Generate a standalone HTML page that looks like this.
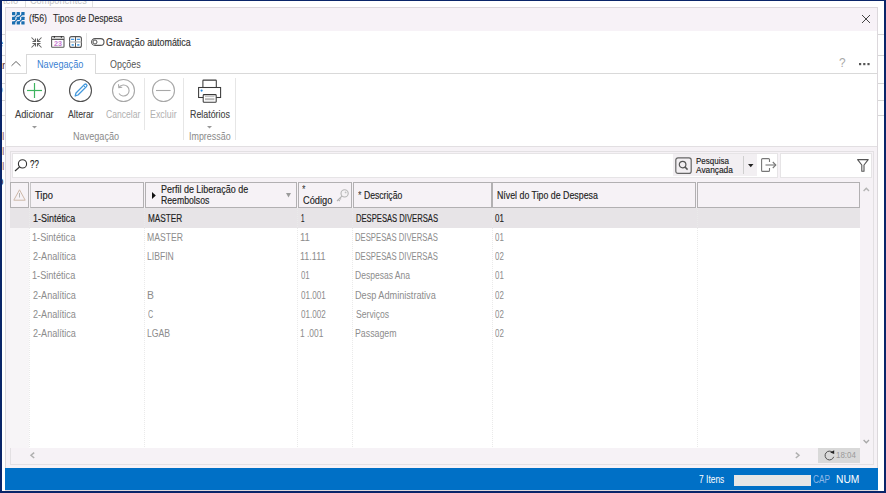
<!DOCTYPE html>
<html><head><meta charset="utf-8">
<style>
*{box-sizing:border-box;margin:0;padding:0}
html,body{width:886px;height:493px;overflow:hidden;background:#fff;font-family:"Liberation Sans",sans-serif;color:#333;position:relative}
.a{position:absolute}
.t{position:absolute;white-space:pre;line-height:1;transform-origin:0 0}
svg{position:absolute;overflow:visible}
</style></head><body>
<!-- background lines -->
<div class="a" style="left:0;top:34px;width:886px;height:1px;background:#d6d6d6"></div>
<div class="a" style="left:0;top:55px;width:886px;height:1px;background:#d6d6d6"></div>
<div class="a" style="left:0;top:83px;width:886px;height:1px;background:#d6d6d6"></div>
<div class="a" style="left:0;top:100px;width:886px;height:1px;background:#d6d6d6"></div>
<div class="a" style="left:0;top:115px;width:886px;height:1px;background:#d6d6d6"></div>
<div class="t" style="left:3px;top:-5px;font-size:11px;color:#c4c4c4;transform:scaleX(0.85)">telo</div>
<div class="a" style="left:25px;top:0;width:1px;height:7px;background:#e0e0e0"></div>
<div class="t" style="left:30px;top:-5px;font-size:11px;color:#c4c4c4;transform:scaleX(0.83)">Componentes</div>
<div class="a" style="left:92px;top:0;width:1px;height:7px;background:#e0e0e0"></div>

<div class="t" style="left:-3px;top:38px;font-size:11px;color:#2a3a6a">e</div>
<div class="t" style="left:-4px;top:60px;font-size:11px;color:#6a3a3a">ar</div>
<div class="t" style="left:-3px;top:84px;font-size:11px;color:#7aa0d0">o</div>
<div class="t" style="left:-4px;top:131px;font-size:11px;color:#9a6a6a">ol</div>
<div class="t" style="left:-4px;top:146px;font-size:11px;color:#9a6a6a">ol</div>
<div class="t" style="left:-4px;top:161px;font-size:11px;color:#9a6a6a">ol</div>
<div class="t" style="left:-5px;top:177px;font-size:11px;color:#333">O</div>
<!-- window -->
<div class="a" style="left:5px;top:7px;width:873px;height:484px;background:#fff;border:1px solid #dcd8dc"></div>
<!-- title bar -->
<div class="a" style="left:6px;top:8px;width:871px;height:22.7px;background:#f7f2f7"></div>
<!-- app icon -->
<svg style="left:11.7px;top:11.9px" width="13" height="13" viewBox="0 0 13 13">
 <g fill="#1a6eb0">
  <rect x="0" y="0" width="3.3" height="3.3" rx="0.5"/><rect x="4.65" y="0" width="3.3" height="3.3" rx="0.5"/><rect x="9.3" y="0" width="3.3" height="3.3" rx="0.5"/>
  <rect x="0" y="4.65" width="3.3" height="3.3" rx="0.5"/><rect x="4.65" y="4.65" width="3.3" height="3.3" rx="0.5"/><rect x="9.3" y="4.65" width="3.3" height="3.3" rx="0.5"/>
  <rect x="0" y="9.3" width="3.3" height="3.3" rx="0.5"/><rect x="4.65" y="9.3" width="3.3" height="3.3" rx="0.5"/><rect x="9.3" y="9.3" width="3.3" height="3.3" rx="0.5"/>
 </g>
 <g stroke="#1a6eb0" stroke-width="1.1"><line x1="1.6" y1="6.3" x2="6.3" y2="1.6"/><line x1="1.6" y1="11" x2="11" y2="1.6"/><line x1="6.3" y1="11" x2="11" y2="6.3"/></g>
</svg>
<!-- close X -->
<svg style="left:862px;top:14.5px" width="8" height="8" viewBox="0 0 8 8"><g stroke="#3a3a3a" stroke-width="0.95"><line x1="0" y1="0" x2="8" y2="8"/><line x1="8" y1="0" x2="0" y2="8"/></g></svg>

<!-- toolbar icons -->
<svg style="left:31px;top:36.5px" width="11" height="11" viewBox="0 0 11 11"><g stroke="#606060" stroke-width="1.05" fill="none">
 <line x1="0.5" y1="0.5" x2="4.5" y2="4.5"/><polyline points="1.5,4.5 4.5,4.5 4.5,1.5"/>
 <line x1="10.5" y1="0.5" x2="6.5" y2="4.5"/><polyline points="9.5,4.5 6.5,4.5 6.5,1.5"/>
 <line x1="0.5" y1="10.5" x2="4.5" y2="6.5"/><polyline points="1.5,6.5 4.5,6.5 4.5,9.5"/>
 <line x1="10.5" y1="10.5" x2="6.5" y2="6.5"/><polyline points="9.5,6.5 6.5,6.5 6.5,9.5"/>
</g></svg>
<svg style="left:51px;top:36px" width="14" height="12" viewBox="0 0 14 12">
 <rect x="0.6" y="0.6" width="12.4" height="10.6" rx="0.8" fill="#fff" stroke="#5a5a5a" stroke-width="1.1"/>
 <rect x="1.1" y="1.1" width="11.4" height="2.3" fill="#d8d8d8"/>
 <line x1="0.6" y1="3.4" x2="13" y2="3.4" stroke="#444" stroke-width="1"/>
 <line x1="3.4" y1="0" x2="3.4" y2="1.8" stroke="#333" stroke-width="1.2"/><line x1="10.4" y1="0" x2="10.4" y2="1.8" stroke="#333" stroke-width="1.2"/>
 <text x="6.9" y="10.1" font-size="7.2" font-family="Liberation Sans" fill="#c77ad0" text-anchor="middle" font-weight="700">23</text>
</svg>
<svg style="left:69px;top:36px" width="13" height="12" viewBox="0 0 13 12">
 <rect x="0.6" y="0.6" width="11.8" height="10.8" rx="2" fill="#fff" stroke="#555" stroke-width="1.1"/>
 <line x1="6.5" y1="0.6" x2="6.5" y2="11.4" stroke="#555" stroke-width="1"/><rect x="0.6" y="5.3" width="11.8" height="1.4" fill="#bbb"/>
 <g stroke="#2a8ae0" stroke-width="1.1"><line x1="2" y1="3.3" x2="5.2" y2="3.3"/><line x1="7.8" y1="3.3" x2="11" y2="3.3"/></g>
 <g fill="#5aa8e8"><rect x="2.6" y="8" width="2.2" height="1.8"/><rect x="8.2" y="8" width="2.2" height="1.8"/></g>
</svg>
<div class="a" style="left:86px;top:33px;width:1px;height:17px;background:#e4e4e4"></div>
<svg style="left:91px;top:38px" width="14" height="8" viewBox="0 0 14 8">
 <rect x="0.6" y="0.6" width="12.4" height="6.8" rx="3.4" fill="none" stroke="#555" stroke-width="1.1"/>
 <circle cx="4" cy="4" r="2" fill="none" stroke="#555" stroke-width="1"/>
</svg>

<!-- tabs row -->
<div class="a" style="left:6px;top:73px;width:871px;height:1px;background:#d9d9d9"></div>
<div class="a" style="left:26px;top:54px;width:70px;height:20px;background:#fff;border:1px solid #d9d9d9;border-bottom:none"></div>
<svg style="left:11px;top:61px" width="10" height="5" viewBox="0 0 10 5"><polyline points="0.5,4.8 5,0.5 9.5,4.8" fill="none" stroke="#666" stroke-width="1"/></svg>
<!-- ? and ... -->
<div class="t" style="left:839.3px;top:57.2px;font-size:12.5px;color:#a8a8a8;transform:scaleX(0.95)">?</div>
<svg style="left:859px;top:62.6px" width="11" height="3" viewBox="0 0 11 3"><g fill="#555"><rect x="0" y="0" width="2.2" height="2.2"/><rect x="4.2" y="0" width="2.2" height="2.2"/><rect x="8.4" y="0" width="2.2" height="2.2"/></g></svg>

<!-- ribbon icons -->
<svg style="left:22px;top:78px" width="25" height="25" viewBox="0 0 25 25">
 <circle cx="12.5" cy="12.5" r="11" fill="none" stroke="#505050" stroke-width="1.1"/>
 <g stroke="#3db45f" stroke-width="1.2"><line x1="5" y1="12.5" x2="20" y2="12.5"/><line x1="12.5" y1="5" x2="12.5" y2="20"/></g>
</svg>
<svg style="left:68px;top:78px" width="25" height="25" viewBox="0 0 25 25">
 <circle cx="12.5" cy="12.5" r="11" fill="none" stroke="#505050" stroke-width="1.1"/>
 <path d="M7.2,18 L8,15 L16.5,6.5 Q17.5,5.5 18.5,6.5 Q19.5,7.5 18.5,8.5 L10,17 Z" fill="none" stroke="#4499dd" stroke-width="1.3" stroke-linejoin="round"/>
 <line x1="15.5" y1="7.5" x2="17.5" y2="9.5" stroke="#4499dd" stroke-width="1"/>
</svg>
<svg style="left:111px;top:78px" width="25" height="25" viewBox="0 0 25 25">
 <circle cx="12.5" cy="12.5" r="11" fill="none" stroke="#a8a8a8" stroke-width="1.1"/>
 <path d="M8.2,9.2 A5.5,5.5 0 1 1 8,15.5" fill="none" stroke="#a8a8a8" stroke-width="1.1"/>
 <polyline points="7.5,6.2 7.8,9.6 11.2,9.2" fill="none" stroke="#a8a8a8" stroke-width="1.1"/>
</svg>
<div class="a" style="left:144px;top:78px;width:1px;height:52px;background:#e6e6e6"></div>
<svg style="left:151px;top:78px" width="25" height="25" viewBox="0 0 25 25">
 <circle cx="12.5" cy="12.5" r="11" fill="none" stroke="#a8a8a8" stroke-width="1.1"/>
 <line x1="5" y1="12.5" x2="19.6" y2="12.5" stroke="#a8a8a8" stroke-width="1.1"/>
</svg>
<div class="a" style="left:183px;top:78px;width:1px;height:62px;background:#e6e6e6"></div>
<svg style="left:197px;top:79px" width="25" height="25" viewBox="0 0 25 25">
 <rect x="5.9" y="1.1" width="13.4" height="7.4" rx="0.6" fill="#fff" stroke="#3a3a3a" stroke-width="1.05"/>
 <rect x="1.6" y="8.5" width="22" height="10" fill="#fff" stroke="#3a3a3a" stroke-width="1.05"/>
 <rect x="6.2" y="15.6" width="13" height="7.6" rx="0.8" fill="#fff" stroke="#3a3a3a" stroke-width="1.05"/>
 <line x1="8" y1="17.6" x2="17.4" y2="17.6" stroke="#aaa" stroke-width="0.8"/>
 <rect x="8" y="19.2" width="9.4" height="2" fill="#b8b8b8"/>
 <circle cx="4.6" cy="11.6" r="1.1" fill="#2a8ae0"/>
</svg>
<div class="a" style="left:235px;top:78px;width:1px;height:62px;background:#e6e6e6"></div>
<!-- dropdown carets -->
<svg style="left:32px;top:125.5px" width="5" height="3" viewBox="0 0 5 3"><polygon points="0,0 5,0 2.5,2.5" fill="#999"/></svg>
<svg style="left:206.5px;top:125.5px" width="5" height="3" viewBox="0 0 5 3"><polygon points="0,0 5,0 2.5,2.5" fill="#999"/></svg>

<!-- ribbon bottom line -->
<div class="a" style="left:6px;top:146px;width:871px;height:1px;background:#e2dfe2"></div>
<!-- content bg -->
<div class="a" style="left:6px;top:147px;width:871px;height:321px;background:#f6f2f6"></div>
<!-- panel border -->
<div class="a" style="left:10px;top:151px;width:864px;height:314px;border:1px solid #e3e0e3"></div>
<!-- search box -->
<div class="a" style="left:12px;top:152.8px;width:766px;height:25px;background:#fff;border:1px solid #e6e4e6"></div>
<div class="a" style="left:673px;top:154px;width:84px;height:22px;background:#f2eff2"></div>
<svg style="left:14px;top:159px" width="14" height="13" viewBox="0 0 14 13">
 <circle cx="8.5" cy="4.9" r="4.1" fill="none" stroke="#333" stroke-width="1.1"/>
 <line x1="5.5" y1="8" x2="1" y2="12" stroke="#333" stroke-width="1.2"/>
</svg>
<svg style="left:675px;top:156.5px" width="17" height="17" viewBox="0 0 17 17">
 <rect x="0.8" y="0.8" width="15.4" height="15.6" rx="2.2" fill="none" stroke="#666" stroke-width="1.2"/>
 <circle cx="7.6" cy="7.6" r="3.3" fill="none" stroke="#555" stroke-width="1.2"/>
 <line x1="10" y1="10" x2="12.6" y2="12.6" stroke="#555" stroke-width="1.5"/>
</svg>
<div class="a" style="left:743px;top:156px;width:1px;height:18px;background:#cfcfcf"></div>
<svg style="left:747.5px;top:164px" width="6" height="4" viewBox="0 0 6 4"><polygon points="0,0 5.5,0 2.75,3.2" fill="#222"/></svg>
<svg style="left:760.5px;top:158px" width="16" height="14" viewBox="0 0 16 14">
 <path d="M8.5,4 V1.6 Q8.5,0.6 7.5,0.6 H1.6 Q0.6,0.6 0.6,1.6 V12.4 Q0.6,13.4 1.6,13.4 H7.5 Q8.5,13.4 8.5,12.4 V10" fill="none" stroke="#777" stroke-width="1.1"/>
 <line x1="4.5" y1="7" x2="14.8" y2="7" stroke="#777" stroke-width="1.1"/>
 <polyline points="11.8,4 14.8,7 11.8,10" fill="none" stroke="#777" stroke-width="1.1"/>
</svg>
<div class="a" style="left:779.5px;top:152.8px;width:92px;height:25px;background:#fff;border:1px solid #e6e4e6"></div>
<svg style="left:857px;top:158.5px" width="12" height="13" viewBox="0 0 12 13">
 <path d="M0.6,0.6 H11.2 L7,6 V12.2 H4.8 V6 Z" fill="none" stroke="#555" stroke-width="1.1" stroke-linejoin="round"/>
</svg>

<!-- grid -->
<div class="a" style="left:10px;top:207.5px;width:850px;height:240px;background:#fff"></div>
<div class="a" style="left:10px;top:207.5px;width:19px;height:240px;background:#f7f5f7"></div>
<div class="a" style="left:10px;top:208px;width:850px;height:19.5px;background:#e7e4e7"></div>
<!-- header cells -->
<div class="a" style="left:10px;top:182px;width:19px;height:25.5px;border:1px solid #b2b0b2;background:#f6f2f6"></div>
<div class="a" style="left:29.5px;top:182px;width:114px;height:25.5px;border:1px solid #b2b0b2;border-left-color:#c8c6c8;background:#f6f2f6"></div>
<div class="a" style="left:144.5px;top:182px;width:152px;height:25.5px;border:1px solid #b2b0b2;background:#f6f2f6"></div>
<div class="a" style="left:297.5px;top:182px;width:54px;height:25.5px;border:1px solid #b2b0b2;background:#f6f2f6"></div>
<div class="a" style="left:352.5px;top:182px;width:139px;height:25.5px;border:1px solid #b2b0b2;background:#f6f2f6"></div>
<div class="a" style="left:492px;top:182px;width:204px;height:25.5px;border:1px solid #b2b0b2;background:#f6f2f6"></div>
<div class="a" style="left:697px;top:182px;width:162.5px;height:25.5px;border:1px solid #b2b0b2;background:#f6f2f6"></div>
<!-- warning triangle -->
<svg style="left:13px;top:189px" width="13" height="12" viewBox="0 0 13 12">
 <path d="M6.5,0.8 L12.2,11.2 H0.8 Z" fill="none" stroke="#cdb8a8" stroke-width="1" stroke-linejoin="round"/>
 <line x1="6.5" y1="4" x2="6.5" y2="8.5" stroke="#aaa" stroke-width="0.9"/>
</svg>
<!-- perfil triangle & filter -->
<svg style="left:152px;top:191.5px" width="4" height="7" viewBox="0 0 4 7"><polygon points="0,0 3.8,3.5 0,7" fill="#111"/></svg>
<svg style="left:286px;top:192.5px" width="5" height="5" viewBox="0 0 5 5"><polygon points="0,0 5,0 2.5,4.5" fill="#9a9a9a"/></svg>
<!-- key -->
<svg style="left:336px;top:189px" width="13" height="13" viewBox="0 0 13 13">
 <circle cx="8.6" cy="4.4" r="3.6" fill="#f5f2f5" stroke="#b5b5b5" stroke-width="1.1"/>
 <circle cx="9.6" cy="3.4" r="0.9" fill="#c0c0c0"/>
 <path d="M6.2,6.8 L1,12 M2.4,10.6 L3.8,12 M3.8,9.2 L5,10.4" fill="none" stroke="#b5b5b5" stroke-width="1.1"/>
</svg>
<!-- dotted column separators -->
<div class="a" style="left:29px;top:208px;width:0;height:239px;border-left:1px dotted #eaeaea"></div>
<div class="a" style="left:144px;top:208px;width:0;height:239px;border-left:1px dotted #eaeaea"></div>
<div class="a" style="left:297px;top:208px;width:0;height:239px;border-left:1px dotted #eaeaea"></div>
<div class="a" style="left:352px;top:208px;width:0;height:239px;border-left:1px dotted #eaeaea"></div>
<div class="a" style="left:491.5px;top:208px;width:0;height:239px;border-left:1px dotted #eaeaea"></div>
<div class="a" style="left:696.5px;top:208px;width:0;height:239px;border-left:1px dotted #eaeaea"></div>
<!-- scroll arrows -->
<svg style="left:863.3px;top:187px" width="7" height="5" viewBox="0 0 7 5"><polyline points="0.6,4 3.3,1.2 6,4" fill="none" stroke="#b4b4b4" stroke-width="1.4"/></svg>
<svg style="left:863.3px;top:439px" width="7" height="5" viewBox="0 0 7 5"><polyline points="0.6,1 3.3,3.8 6,1" fill="none" stroke="#a8a8a8" stroke-width="1.3"/></svg>
<svg style="left:29.5px;top:451.8px" width="5" height="7" viewBox="0 0 5 7"><polyline points="4.2,0.6 1,3.3 4.2,6" fill="none" stroke="#b0b0b0" stroke-width="1.5"/></svg>
<svg style="left:795px;top:451.8px" width="5" height="7" viewBox="0 0 5 7"><polyline points="0.8,0.6 4,3.3 0.8,6" fill="none" stroke="#b0b0b0" stroke-width="1.5"/></svg>
<!-- refresh box -->
<div class="a" style="left:818px;top:448px;width:42px;height:15px;background:#d9d9d9"></div>
<svg style="left:823.8px;top:450px" width="11" height="11" viewBox="0 0 11 11">
 <path d="M8.6,2.4 A4.4,4.4 0 1 0 9.7,6.8" fill="none" stroke="#505050" stroke-width="1"/>
 <polygon points="6.2,2.6 10.2,0.2 10.2,4" fill="#222"/>
</svg>

<!-- status bar -->
<div class="a" style="left:5px;top:468px;width:873px;height:22px;background:#0070c6"></div>
<div class="a" style="left:733.5px;top:474.5px;width:77px;height:11px;background:#e6e6e6"></div>

<!-- navy frame -->
<div class="a" style="left:0;top:0;width:886px;height:493px;border:2px solid #0a2569;border-top-width:1.5px;border-right-width:2.2px;border-bottom-width:2.2px"></div>

<div class="t" style="left:29.00px;top:13.00px;font-size:10.5px;font-weight:400;color:#2a2a2a;transform:scaleX(0.8286);-webkit-text-stroke:0.1px #2a2a2a;">(f56)</div>
<div class="t" style="left:52.70px;top:13.00px;font-size:10.5px;font-weight:400;color:#2a2a2a;transform:scaleX(0.8224);-webkit-text-stroke:0.1px #2a2a2a;">Tipos de Despesa</div>
<div class="t" style="left:106.20px;top:37.75px;font-size:10px;font-weight:400;color:#333;transform:scaleX(0.8916);-webkit-text-stroke:0.15px #333;">Gravação automática</div>
<div class="t" style="left:37.28px;top:59.75px;font-size:10px;font-weight:400;color:#3b7fd2;transform:scaleX(0.9163);">Navegação</div>
<div class="t" style="left:110.20px;top:59.75px;font-size:10px;font-weight:400;color:#555;transform:scaleX(0.8912);">Opções</div>
<div class="t" style="left:15.10px;top:109.75px;font-size:10px;font-weight:400;color:#404040;transform:scaleX(0.9262);-webkit-text-stroke:0.1px #404040;">Adicionar</div>
<div class="t" style="left:67.60px;top:109.75px;font-size:10px;font-weight:400;color:#404040;transform:scaleX(0.8700);-webkit-text-stroke:0.1px #404040;">Alterar</div>
<div class="t" style="left:106.00px;top:109.75px;font-size:10px;font-weight:400;color:#b0b0b0;transform:scaleX(0.8575);">Cancelar</div>
<div class="t" style="left:150.01px;top:109.75px;font-size:10px;font-weight:400;color:#b0b0b0;transform:scaleX(0.8862);">Excluir</div>
<div class="t" style="left:189.70px;top:109.75px;font-size:10px;font-weight:400;color:#404040;transform:scaleX(0.8844);-webkit-text-stroke:0.1px #404040;">Relatórios</div>
<div class="t" style="left:73.39px;top:131.75px;font-size:10px;font-weight:400;color:#8a8a8a;transform:scaleX(0.9122);">Navegação</div>
<div class="t" style="left:188.81px;top:131.75px;font-size:10px;font-weight:400;color:#8a8a8a;transform:scaleX(0.8911);">Impressão</div>
<div class="t" style="left:30.40px;top:159.75px;font-size:10px;font-weight:400;color:#222;transform:scaleX(0.7909);-webkit-text-stroke:0.15px #222;">??</div>
<div class="t" style="left:696.40px;top:156.85px;font-size:8.8px;font-weight:400;color:#222;transform:scaleX(0.9081);-webkit-text-stroke:0.15px #222;">Pesquisa</div>
<div class="t" style="left:696.40px;top:165.85px;font-size:8.8px;font-weight:400;color:#222;transform:scaleX(0.9462);-webkit-text-stroke:0.15px #222;">Avançada</div>
<div class="t" style="left:34.70px;top:190.75px;font-size:10px;font-weight:400;color:#222;transform:scaleX(0.9368);-webkit-text-stroke:0.15px #222;">Tipo</div>
<div class="t" style="left:160.60px;top:184.75px;font-size:10px;font-weight:400;color:#222;transform:scaleX(0.8959);-webkit-text-stroke:0.15px #222;">Perfil de Liberação de</div>
<div class="t" style="left:160.80px;top:195.75px;font-size:10px;font-weight:400;color:#222;transform:scaleX(0.8696);-webkit-text-stroke:0.15px #222;">Reembolsos</div>
<div class="t" style="left:301.80px;top:184.75px;font-size:10px;font-weight:400;color:#333;transform:scaleX(0.9000);">*</div>
<div class="t" style="left:302.60px;top:195.75px;font-size:10px;font-weight:400;color:#222;transform:scaleX(0.9250);-webkit-text-stroke:0.15px #222;">Código</div>
<div class="t" style="left:357.50px;top:190.75px;font-size:10px;font-weight:400;color:#333;transform:scaleX(0.9000);">*</div>
<div class="t" style="left:363.80px;top:190.75px;font-size:10px;font-weight:400;color:#222;transform:scaleX(0.8600);-webkit-text-stroke:0.15px #222;">Descrição</div>
<div class="t" style="left:497.00px;top:190.75px;font-size:10px;font-weight:400;color:#222;transform:scaleX(0.8809);-webkit-text-stroke:0.15px #222;">Nível do Tipo de Despesa</div>
<div class="t" style="left:32.60px;top:213.75px;font-size:10px;font-weight:400;color:#1e1e1e;transform:scaleX(0.8958);-webkit-text-stroke:0.15px #1e1e1e;">1-Sintética</div>
<div class="t" style="left:147.60px;top:213.75px;font-size:10px;font-weight:400;color:#1e1e1e;transform:scaleX(0.8214);-webkit-text-stroke:0.15px #1e1e1e;">MASTER</div>
<div class="t" style="left:301.00px;top:213.75px;font-size:10px;font-weight:400;color:#1e1e1e;transform:scaleX(0.6167);-webkit-text-stroke:0.15px #1e1e1e;">1</div>
<div class="t" style="left:356.00px;top:213.75px;font-size:10px;font-weight:400;color:#1e1e1e;transform:scaleX(0.7645);-webkit-text-stroke:0.15px #1e1e1e;">DESPESAS DIVERSAS</div>
<div class="t" style="left:495.30px;top:213.75px;font-size:10px;font-weight:400;color:#1e1e1e;transform:scaleX(0.7909);-webkit-text-stroke:0.15px #1e1e1e;">01</div>
<div class="t" style="left:31.69px;top:232.75px;font-size:10px;font-weight:400;color:#8c8c8c;transform:scaleX(0.9149);">1-Sintética</div>
<div class="t" style="left:146.74px;top:232.75px;font-size:10px;font-weight:400;color:#8c8c8c;transform:scaleX(0.8625);">MASTER</div>
<div class="t" style="left:300.04px;top:232.75px;font-size:10px;font-weight:400;color:#8c8c8c;transform:scaleX(0.9556);">11</div>
<div class="t" style="left:355.23px;top:232.75px;font-size:10px;font-weight:400;color:#8c8c8c;transform:scaleX(0.7717);">DESPESAS DIVERSAS</div>
<div class="t" style="left:495.30px;top:232.75px;font-size:10px;font-weight:400;color:#8c8c8c;transform:scaleX(0.7909);">01</div>
<div class="t" style="left:32.60px;top:251.75px;font-size:10px;font-weight:400;color:#8c8c8c;transform:scaleX(0.9083);">2-Analítica</div>
<div class="t" style="left:146.74px;top:251.75px;font-size:10px;font-weight:400;color:#8c8c8c;transform:scaleX(0.8600);">LIBFIN</div>
<div class="t" style="left:300.10px;top:251.75px;font-size:10px;font-weight:400;color:#8c8c8c;transform:scaleX(0.9000);">11.111</div>
<div class="t" style="left:355.23px;top:251.75px;font-size:10px;font-weight:400;color:#8c8c8c;transform:scaleX(0.7717);">DESPESAS DIVERSAS</div>
<div class="t" style="left:495.30px;top:251.75px;font-size:10px;font-weight:400;color:#8c8c8c;transform:scaleX(0.7909);">02</div>
<div class="t" style="left:31.69px;top:270.75px;font-size:10px;font-weight:400;color:#8c8c8c;transform:scaleX(0.9149);">1-Sintética</div>
<div class="t" style="left:301.00px;top:270.75px;font-size:10px;font-weight:400;color:#8c8c8c;transform:scaleX(0.7818);">01</div>
<div class="t" style="left:355.15px;top:270.75px;font-size:10px;font-weight:400;color:#8c8c8c;transform:scaleX(0.8531);">Despesas Ana</div>
<div class="t" style="left:495.30px;top:270.75px;font-size:10px;font-weight:400;color:#8c8c8c;transform:scaleX(0.7909);">01</div>
<div class="t" style="left:32.60px;top:290.75px;font-size:10px;font-weight:400;color:#8c8c8c;transform:scaleX(0.9083);">2-Analítica</div>
<div class="t" style="left:146.56px;top:290.75px;font-size:10px;font-weight:400;color:#8c8c8c;transform:scaleX(1.0400);">B</div>
<div class="t" style="left:301.00px;top:290.75px;font-size:10px;font-weight:400;color:#8c8c8c;transform:scaleX(0.8100);">01.001</div>
<div class="t" style="left:355.09px;top:290.75px;font-size:10px;font-weight:400;color:#8c8c8c;transform:scaleX(0.9136);">Desp Administrativa</div>
<div class="t" style="left:495.30px;top:290.75px;font-size:10px;font-weight:400;color:#8c8c8c;transform:scaleX(0.7909);">02</div>
<div class="t" style="left:32.60px;top:309.75px;font-size:10px;font-weight:400;color:#8c8c8c;transform:scaleX(0.9083);">2-Analítica</div>
<div class="t" style="left:147.60px;top:309.75px;font-size:10px;font-weight:400;color:#8c8c8c;transform:scaleX(0.7143);">C</div>
<div class="t" style="left:301.00px;top:309.75px;font-size:10px;font-weight:400;color:#8c8c8c;transform:scaleX(0.8100);">01.002</div>
<div class="t" style="left:356.00px;top:309.75px;font-size:10px;font-weight:400;color:#8c8c8c;transform:scaleX(0.8618);">Serviços</div>
<div class="t" style="left:495.30px;top:309.75px;font-size:10px;font-weight:400;color:#8c8c8c;transform:scaleX(0.7909);">02</div>
<div class="t" style="left:32.60px;top:328.75px;font-size:10px;font-weight:400;color:#8c8c8c;transform:scaleX(0.9083);">2-Analítica</div>
<div class="t" style="left:146.73px;top:328.75px;font-size:10px;font-weight:400;color:#8c8c8c;transform:scaleX(0.8680);">LGAB</div>
<div class="t" style="left:300.16px;top:328.75px;font-size:10px;font-weight:400;color:#8c8c8c;transform:scaleX(0.8407);">1 .001</div>
<div class="t" style="left:355.12px;top:328.75px;font-size:10px;font-weight:400;color:#8c8c8c;transform:scaleX(0.8783);">Passagem</div>
<div class="t" style="left:495.30px;top:328.75px;font-size:10px;font-weight:400;color:#8c8c8c;transform:scaleX(0.7909);">02</div>
<div class="t" style="left:699.20px;top:474.75px;font-size:10px;font-weight:400;color:#ffffff;transform:scaleX(0.8433);">7 Itens</div>
<div class="t" style="left:812.70px;top:474.75px;font-size:10px;font-weight:400;color:#8fb8e6;transform:scaleX(0.8238);">CAP</div>
<div class="t" style="left:836.28px;top:474.75px;font-size:10px;font-weight:400;color:#ffffff;transform:scaleX(1.0238);">NUM</div>
<div class="t" style="left:836.20px;top:450.95px;font-size:8.6px;font-weight:400;color:#9a9a9a;transform:scaleX(0.9238);">18:04</div>
</body></html>
